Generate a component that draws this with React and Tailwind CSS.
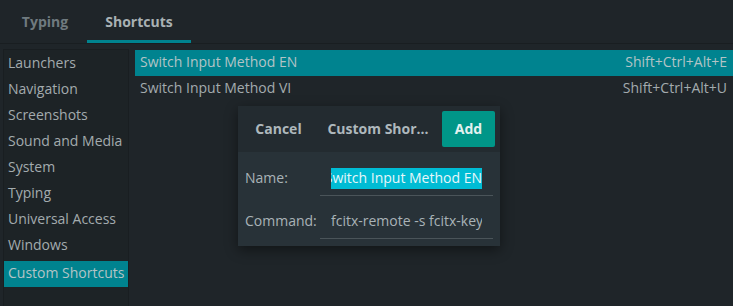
import React from "react";

const categories = [
  "Launchers",
  "Navigation",
  "Screenshots",
  "Sound and Media",
  "System",
  "Typing",
  "Universal Access",
  "Windows",
  "Custom Shortcuts",
];

const shortcuts = [
  { name: "Switch Input Method EN", keys: "Shift+Ctrl+Alt+E" },
  { name: "Switch Input Method VI", keys: "Shift+Ctrl+Alt+U" },
];

const App = () => {
  const selectedCat = "Custom Shortcuts";

  return (
    <div className="w-[733px] h-[306px] overflow-hidden bg-[#1f2529] text-[#a3abae] text-[14px] font-['Open_Sans',sans-serif] flex flex-col">
      {/* tabs */}
      <div className="h-[44px] flex items-stretch border-b border-[#191e21] pl-[3px] shrink-0">
        <div className="w-[84px] flex items-center justify-center font-bold text-[#6f7a7f]">Typing</div>
        <div className="w-[104px] flex items-center justify-center font-bold text-[#a9b1b4] border-b-[3px] border-[#00838f] pt-[3px]">
          Shortcuts
        </div>
      </div>

      <div className="flex flex-1 pt-[5px] pl-[3px] gap-[6px] relative">
        {/* sidebar */}
        <div className="w-[126px] border border-[#191e21] border-b-0 bg-[#1d2326] pt-[1px]">
          {categories.map((c) => (
            <div
              key={c}
              className={`h-[26px] flex items-center pl-[4px] pb-[4px] whitespace-nowrap ${c === selectedCat ? "bg-[#00838f] text-[#b3c4c6] mt-[2px]" : ""}`}
            >
              {c}
            </div>
          ))}
        </div>

        {/* list */}
        <div className="flex-1 pt-[1px]">
          {shortcuts.map((s, i) => (
            <div
              key={s.name}
              className={`h-[26px] flex items-center justify-between pl-[5px] pr-[6px] pb-[4px] ${i === 0 ? "bg-[#00838f] text-[#b3c4c6]" : ""}`}
            >
              <span>{s.name}</span>
              <span>{s.keys}</span>
            </div>
          ))}
        </div>

        {/* dialog */}
        <div className="absolute left-[238px] top-[62px] w-[262px] shadow-[0_4px_12px_rgba(0,0,0,0.45)]">
          <div className="h-[46px] bg-[#232b30] flex items-center pl-[2px] pr-[5px]">
            <div className="w-[77px] text-center font-bold text-[#aeb8bc] pb-[2px]">Cancel</div>
            <div className="w-[122px] text-center font-bold text-[#aeb8bc] whitespace-nowrap pb-[2px]">Custom Shor...</div>
            <div className="w-[53px] h-[36px] ml-[3px] bg-[#009688] rounded-[2px] flex items-center justify-center font-bold text-[#e4f2f0] pb-[2px]">Add</div>
          </div>
          <div className="bg-[#283238] pl-[7px] pr-[7px] pt-[10px] pb-[7px] flex flex-col gap-[9px]">
            <div className="flex items-center">
              <div className="w-[75px] shrink-0 text-[#a9b3b7] pb-[3px]">Name:</div>
              <div className="flex-1 min-w-0 h-[34px] flex items-center border-b border-[#4a5459]">
                <div className="mx-[11px] flex-1 min-w-0 overflow-hidden flex justify-end">
                  <span className="shrink-0 bg-[#00bcd4] text-[#e6f7fa] whitespace-nowrap h-[21px] flex items-center pb-[2px]">
                    Switch Input Method EN
                  </span>
                </div>
              </div>
            </div>
            <div className="flex items-center">
              <div className="w-[75px] shrink-0 text-[#a9b3b7] pb-[3px]">Command:</div>
              <div className="flex-1 min-w-0 h-[34px] flex items-center border-b border-[#4a5459]">
                <div className="mx-[11px] flex-1 min-w-0 overflow-hidden whitespace-nowrap text-[#a9b3b7] pb-[3px]">
                  fcitx-remote -s fcitx-keyboard-us
                </div>
              </div>
            </div>
          </div>
        </div>
      </div>
    </div>
  );
};

export default App;
